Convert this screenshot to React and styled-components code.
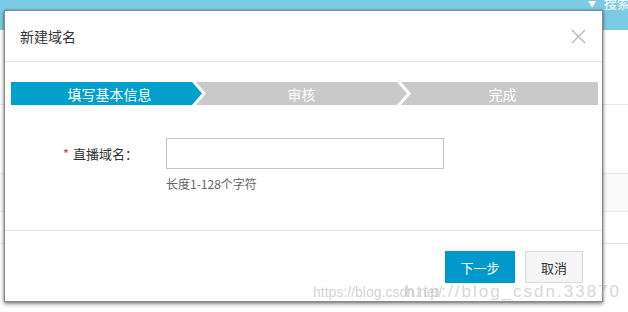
import React from "react";
import styled, { createGlobalStyle } from "styled-components";

const GlobalStyle = createGlobalStyle`
  html, body { margin: 0; padding: 0; background: #fff; }
  body { font-family: "Noto Sans CJK SC", "Liberation Sans", sans-serif; }
  * { box-sizing: border-box; }
`;

const Page = styled.div`
  position: relative;
  width: 628px;
  height: 312px;
  overflow: hidden;
  background: #fff;
`;

const TopBar = styled.div`
  height: 30px;
  background: #7ccae3;
  display: flex;
  justify-content: flex-end;
  align-items: flex-start;
  color: #fff;
  line-height: 1;
`;

const SearchTab = styled.div`
  display: flex;
  align-items: center;
  gap: 8px;
  margin-top: -4px;
  margin-right: -2px;
  font-size: 13px;
`;

const Caret = styled.span`
  font-size: 8px;
  margin-top: 2px;
`;

const BgRow = styled.div`
  height: ${(p) => p.$h}px;
  border-bottom: 1px solid #e8e8e8;
  background: ${(p) => p.$bg || "#fff"};
`;

const Modal = styled.div`
  position: absolute;
  left: 4px;
  top: 10px;
  width: 599px;
  height: 292px;
  background: #fff;
  border: 1px solid #8a8a8a;
  box-shadow: 0 2px 4px rgba(0, 0, 0, 0.45), 0 0 2px rgba(0, 0, 0, 0.3);
  display: flex;
  flex-direction: column;
`;

const Header = styled.div`
  height: 51px;
  display: flex;
  align-items: center;
  justify-content: space-between;
  padding: 0 16px 0 15px;
  border-bottom: 1px solid #e3e3e3;
  flex-shrink: 0;
`;

const Title = styled.div`
  font-size: 14px;
  color: #333;
`;

const CloseBtn = styled.div`
  width: 16px;
  height: 16px;
  display: flex;
  align-items: center;
  justify-content: center;
`;

const Body = styled.div`
  flex: 1;
  padding: 20px 4px 0 6px;
  border-bottom: 1px solid #e3e3e3;
`;

const Steps = styled.div`
  display: flex;
  height: 23px;
`;

const Step = styled.div`
  flex: ${(p) => (p.$first ? "0 0 191px" : "1")};
  height: 100%;
  display: flex;
  align-items: center;
  justify-content: center;
  color: #fff;
  font-size: 14px;
  background: ${(p) => (p.$active ? "#019fcb" : "#c9c9c9")};
  margin-left: ${(p) => (p.$first ? "0" : "-6px")};
  padding-left: ${(p) => (p.$first ? "6px" : p.$last ? "6px" : "10px")};
  padding-right: ${(p) => (p.$first || p.$last ? "0" : "10px")};
  clip-path: ${(p) =>
    p.$first
      ? "polygon(0 0, calc(100% - 10px) 0, 100% 50%, calc(100% - 10px) 100%, 0 100%)"
      : p.$last
      ? "polygon(0 0, 100% 0, 100% 100%, 0 100%, 10px 50%)"
      : "polygon(0 0, calc(100% - 10px) 0, 100% 50%, calc(100% - 10px) 100%, 0 100%, 10px 50%)"};
`;

const FormRow = styled.div`
  display: grid;
  grid-template-columns: 127px 278px;
  column-gap: 28px;
  margin-top: 33px;
`;

const Label = styled.div`
  height: 31px;
  display: flex;
  align-items: center;
  justify-content: flex-end;
  font-size: 13px;
  color: #333;
`;

const Star = styled.span`
  color: #e4393c;
  margin-right: 4px;
`;

const Field = styled.div`
  display: flex;
  flex-direction: column;
`;

const Input = styled.input`
  width: 278px;
  height: 31px;
  border: 1px solid #c4c4c4;
  outline: none;
  padding: 0 8px;
  font-size: 13px;
`;

const Hint = styled.div`
  margin-top: 6px;
  font-size: 12px;
  color: #666;
`;

const Footer = styled.div`
  height: 70px;
  display: flex;
  justify-content: flex-end;
  align-items: flex-start;
  gap: 10px;
  padding: 20px 19px 0 0;
  flex-shrink: 0;
`;

const Button = styled.button`
  height: 32px;
  width: ${(p) => p.$w}px;
  font-family: inherit;
  font-size: 13px;
  cursor: pointer;
  border: 1px solid ${(p) => (p.$primary ? "#0099cc" : "#dadada")};
  background: ${(p) => (p.$primary ? "#0099cc" : "#f5f5f5")};
  color: ${(p) => (p.$primary ? "#fff" : "#333")};
`;

const Watermark = styled.div`
  position: absolute;
  left: 313px;
  top: 284px;
  font-family: "Liberation Sans", sans-serif;
  font-size: 14px;
  color: rgba(200, 200, 200, 0.8);
  white-space: nowrap;
  pointer-events: none;
`;

const WatermarkOver = styled.span`
  position: absolute;
  left: 92px;
  top: -2px;
  font-size: 17px;
  letter-spacing: 2px;
  color: rgba(180, 180, 180, 0.55);
`;

export default function App() {
  return (
    <>
      <GlobalStyle />
      <Page>
        <TopBar>
          <SearchTab>
            <Caret>▼</Caret>
            <span>搜索</span>
          </SearchTab>
        </TopBar>
        <BgRow $h={75} />
        <BgRow $h={69} />
        <BgRow $h={38} $bg="#fafafa" />
        <BgRow $h={32} />
        <Modal>
          <Header>
            <Title>新建域名</Title>
            <CloseBtn>
              <svg width="15" height="15" viewBox="0 0 15 15">
                <path d="M1 1L14 14M14 1L1 14" stroke="#b5b5b5" strokeWidth="1.3" fill="none" />
              </svg>
            </CloseBtn>
          </Header>
          <Body>
            <Steps>
              <Step $active $first>填写基本信息</Step>
              <Step>审核</Step>
              <Step $last>完成</Step>
            </Steps>
            <FormRow>
              <Label>
                <Star>*</Star>直播域名：
              </Label>
              <Field>
                <Input />
                <Hint>长度1-128个字符</Hint>
              </Field>
            </FormRow>
          </Body>
          <Footer>
            <Button $primary $w={70}>下一步</Button>
            <Button $w={58}>取消</Button>
          </Footer>
        </Modal>
        <Watermark>
          https://blog.csdn.net/
          <WatermarkOver>http://blog_csdn.33870</WatermarkOver>
        </Watermark>
      </Page>
    </>
  );
}
